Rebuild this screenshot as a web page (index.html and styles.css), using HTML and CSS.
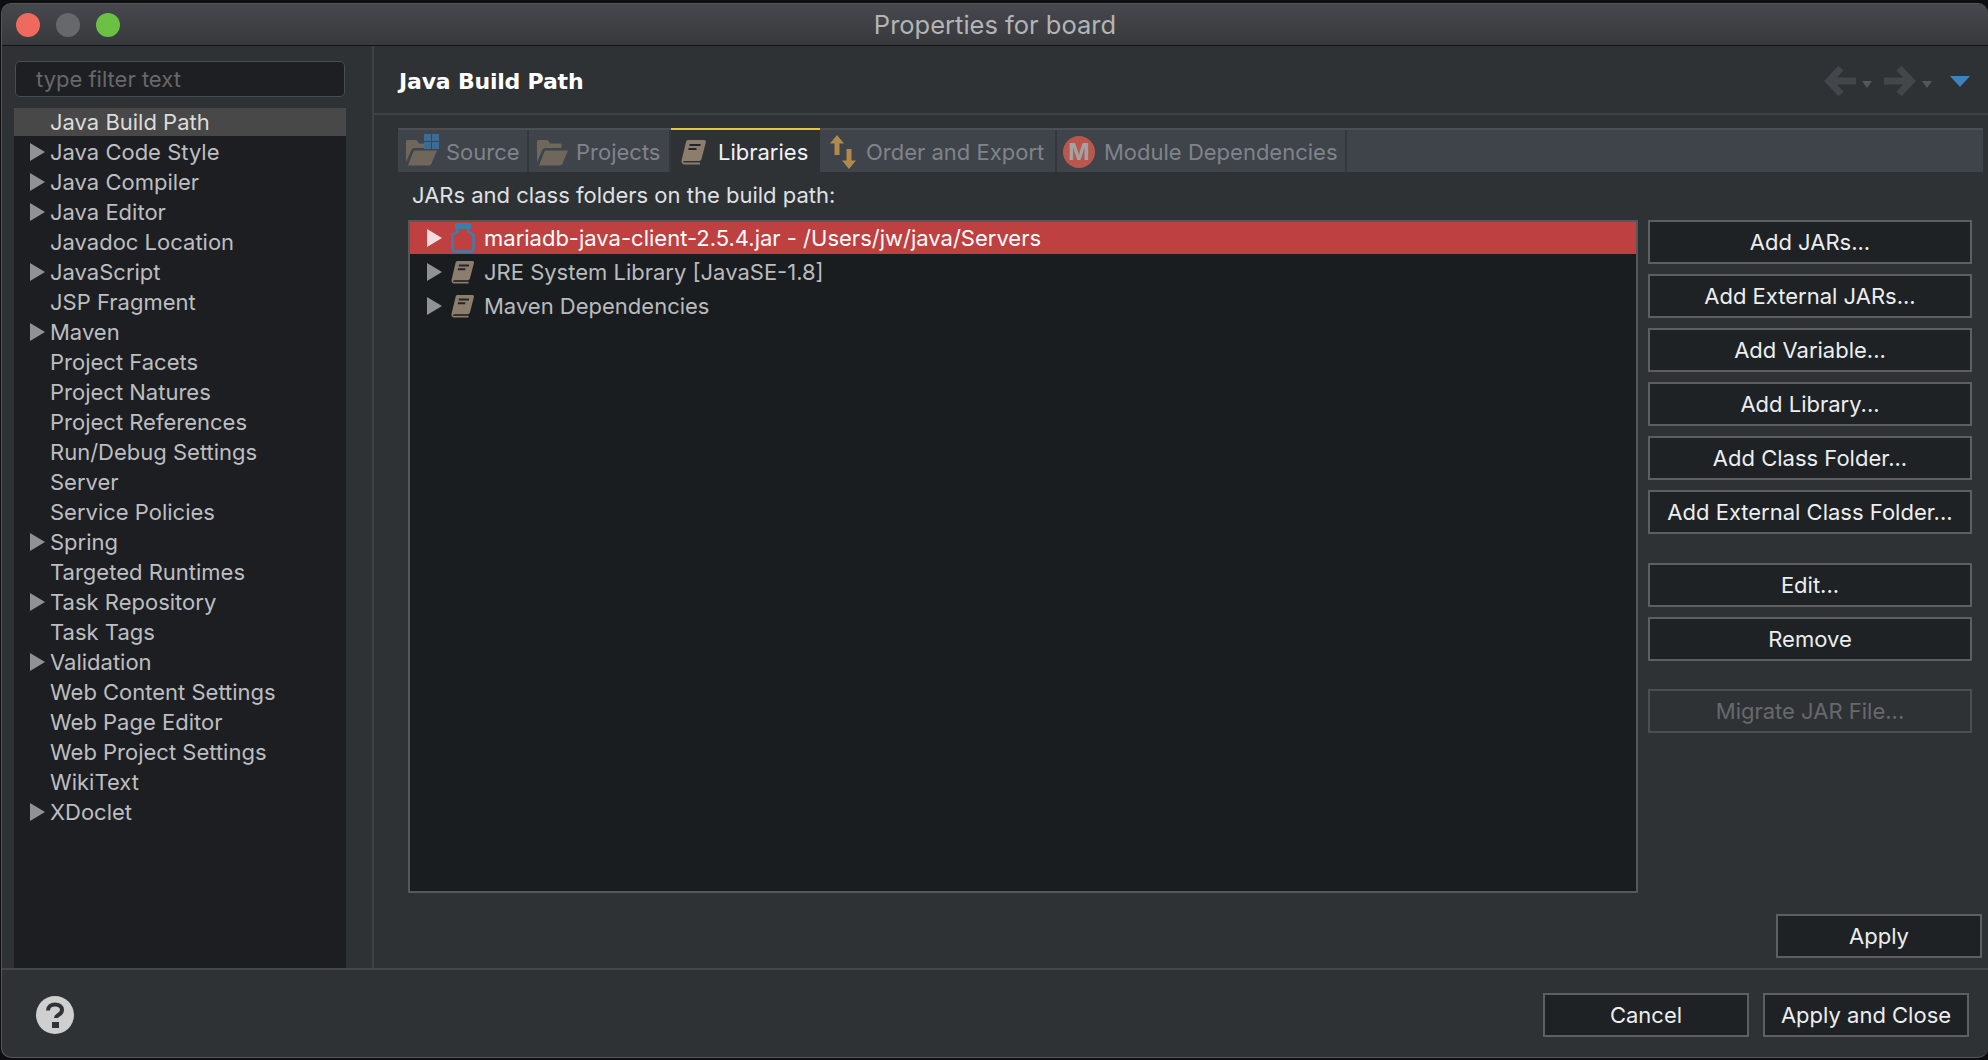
FILE: index.html
```html
<!DOCTYPE html>
<html lang="en">
<head>
  <meta charset="UTF-8">
  <title>Properties for board</title>
  <link rel="stylesheet" href="styles.css">
</head>
<body>
  <svg class="defs" width="0" height="0">
    <symbol id="folder" viewBox="0 0 32 28">
      <path d="M1 24V3.500C1 2.500 1.800 2 2.600 2h8c.8 0 1.400.4 1.800 1l1.600 2.500h10c1 0 1.600.7 1.600 1.600V10H9.500C8 10 7 10.700 6.400 12L2 22z" fill="#6f675c"/>
      <path d="M3 27.500 8.300 14c.4-1 1-1.500 2-1.500H32L26.500 25.500c-.5 1.200-1.300 2-2.500 2z" fill="#6f675c"/>
    </symbol>
    <symbol id="book" viewBox="0 0 26 26">
      <path d="M7 1h16c1.500 0 2.200 1 1.800 2.400L20.500 20c-.4 1.300-1.300 2-2.500 2H4c-1.800 0-2.600 1.500-1.500 1.500H19v2H4C1 25.500 0 23 .8 20.500L5 3C5.300 1.700 6 1 7 1z" fill="#8c7d6c"/>
      <path d="M8.500 6h11M7.500 10h8" stroke="#22252a" stroke-width="2"/>
    </symbol>
    <symbol id="jar" viewBox="0 0 24 30">
      <rect x="4" y="0" width="16" height="6" rx="1.500" fill="#3f7cae"/>
      <path d="M6.500 6v2.500L1.500 12v13.500c0 2 1 3 3 3h15c2 0 3-1 3-3V12l-5-3.500V6" fill="none" stroke="#3f7cae" stroke-width="2.500"/>
    </symbol>
  </svg>

  <div class="window">
    <div class="titlebar">
      <div class="lights">
        <span class="light red"></span>
        <span class="light grey"></span>
        <span class="light green"></span>
      </div>
      <div class="title">Properties for board</div>
    </div>

    <div class="main">
      <div class="sidebar">
        <div class="filter">type filter text</div>
        <ul class="tree">
          <li class="selected">Java Build Path</li>
          <li class="arrow">Java Code Style</li>
          <li class="arrow">Java Compiler</li>
          <li class="arrow">Java Editor</li>
          <li>Javadoc Location</li>
          <li class="arrow">JavaScript</li>
          <li>JSP Fragment</li>
          <li class="arrow">Maven</li>
          <li>Project Facets</li>
          <li>Project Natures</li>
          <li>Project References</li>
          <li>Run/Debug Settings</li>
          <li>Server</li>
          <li>Service Policies</li>
          <li class="arrow">Spring</li>
          <li>Targeted Runtimes</li>
          <li class="arrow">Task Repository</li>
          <li>Task Tags</li>
          <li class="arrow">Validation</li>
          <li>Web Content Settings</li>
          <li>Web Page Editor</li>
          <li>Web Project Settings</li>
          <li>WikiText</li>
          <li class="arrow">XDoclet</li>
        </ul>
      </div>

      <div class="content">
        <div class="header">
          <h1>Java Build Path</h1>
          <div class="nav">
            <svg width="32" height="32" viewBox="0 0 32 32"><path d="M17 3 5 16l12 13M6 16h26" fill="none" stroke="#43464b" stroke-width="7"/></svg>
            <span class="mini"></span>
            <svg width="32" height="32" viewBox="0 0 32 32"><path d="M15 3l12 13-12 13M26 16H0" fill="none" stroke="#43464b" stroke-width="7"/></svg>
            <span class="mini"></span>
            <span class="menu"></span>
          </div>
        </div>

        <div class="tabs">
          <div class="tab tab-source">
            <span class="tab-icon">
              <svg width="32" height="28"><use href="#folder"/></svg>
              <svg class="grid" width="15" height="15" viewBox="0 0 15 15"><path d="M0 0h7v7H0zM8 0h7v7H8zM0 8h7v7H0zM8 8h7v7H8z" fill="#3a6d96"/></svg>
            </span>
            Source
          </div>
          <div class="tab tab-projects">
            <svg width="32" height="28"><use href="#folder"/></svg>
            Projects
          </div>
          <div class="tab tab-libraries active">
            <svg width="26" height="26"><use href="#book"/></svg>
            Libraries
          </div>
          <div class="tab tab-order">
            <svg width="26" height="34" viewBox="0 0 26 34"><path d="M7 0l7 8.500H9.500V20h-5V8.500H0zM19 34l7-8.500h-4.500V14h-5v11.500H12z" fill="#b08a4c"/></svg>
            Order and Export
          </div>
          <div class="tab tab-module">
            <span class="m-icon">M</span>
            Module Dependencies
          </div>
        </div>

        <div class="body">
          <div class="label">JARs and class folders on the build path:</div>
          <div class="list-row">
            <div class="list">
              <div class="lib selected">
                <span class="twisty"></span>
                <svg width="24" height="30"><use href="#jar"/></svg>
                mariadb-java-client-2.5.4.jar - /Users/jw/java/Servers
              </div>
              <div class="lib">
                <span class="twisty"></span>
                <svg width="24" height="26"><use href="#book"/></svg>
                JRE System Library [JavaSE-1.8]
              </div>
              <div class="lib">
                <span class="twisty"></span>
                <svg width="24" height="26"><use href="#book"/></svg>
                Maven Dependencies
              </div>
            </div>
            <div class="buttons">
              <button>Add JARs...</button>
              <button>Add External JARs...</button>
              <button>Add Variable...</button>
              <button>Add Library...</button>
              <button>Add Class Folder...</button>
              <button>Add External Class Folder...</button>
              <button class="gap-top">Edit...</button>
              <button>Remove</button>
              <button class="gap-top disabled">Migrate JAR File...</button>
            </div>
          </div>
          <div class="apply-row">
            <button class="wide">Apply</button>
          </div>
        </div>
      </div>
    </div>

    <div class="footer">
      <svg class="help" width="38" height="38" viewBox="0 0 38 38">
        <circle cx="19" cy="19" r="19" fill="#cfcfcf"/>
        <path d="M12 14.500c0-4 3-6 7-6s7 2 7 5.500c0 3-2 4.200-4 5.300-1.300.7-2 1.200-2 2.700" fill="none" stroke="#2f3336" stroke-width="4"/>
        <rect x="16" y="26" width="7" height="6" fill="#2f3336"/>
      </svg>
      <div class="footer-buttons">
        <button class="wide">Cancel</button>
        <button class="wide">Apply and Close</button>
      </div>
    </div>
  </div>
</body>
</html>
```

FILE: styles.css
```css
* {
  box-sizing: border-box;
}
body {
  margin: 0;
  height: 1060px;
  overflow: hidden;
  background: #0e0e10;
  font-family: "Inter", "Noto Sans", sans-serif;
  font-size: 22px;
  color: #e6e8ea;
}
.defs {
  display: block;
  height: 0;
}
.window {
  margin: 3px 0 0 1px;
  height: 1055px;
  background: #2f3235;
  border: 1px solid #55585b;
  border-right: none;
  border-radius: 10px;
  overflow: hidden;
  display: flex;
  flex-direction: column;
}

/* title bar */
.titlebar {
  height: 42px;
  flex: none;
  display: flex;
  align-items: center;
  position: relative;
  background: linear-gradient(#46484d, #38393d);
  border-bottom: 1px solid #111214;
}
.lights {
  display: flex;
  gap: 16px;
  padding-left: 14px;
}
.light {
  width: 24px;
  height: 24px;
  border-radius: 50%;
}
.red { background: #ee6a5e; }
.grey { background: #67686c; }
.green { background: #6cc043; }
.title {
  position: absolute;
  left: 0;
  right: 0;
  text-align: center;
  font-size: 25.500px;
  color: #b3b4b6;
}

.main {
  height: 922px;
  flex: none;
  display: flex;
}

/* left tree */
.sidebar {
  width: 372px;
  flex: none;
  padding: 15px 26px 0 12px;
  border-right: 2px solid #3f4245;
  display: flex;
  flex-direction: column;
}
.filter {
  height: 36px;
  flex: none;
  margin: 0 1px;
  padding: 4px 20px;
  background: #1e1f22;
  border: 1px solid #4a4d50;
  border-radius: 5px;
  color: #66686b;
}
.tree {
  list-style: none;
  margin: 11px 0 0;
  padding: 0;
  flex: 1;
  background: #1d1e21;
  color: #bcbec1;
}
.tree li {
  height: 30px;
  line-height: 29px;
  padding-left: 36px;
  position: relative;
  white-space: nowrap;
}
.tree li.selected {
  background: #484848;
  color: #dcdcdc;
  height: 28px;
  margin-bottom: 2px;
}
.tree li.arrow::before,
.twisty {
  content: "";
  width: 0;
  height: 0;
  border-left: 15px solid #909295;
  border-top: 9px solid transparent;
  border-bottom: 9px solid transparent;
}
.tree li.arrow::before {
  position: absolute;
  left: 16px;
  top: 5px;
}

/* right page */
.content {
  flex: 1;
  min-width: 0;
  display: flex;
  flex-direction: column;
}
.header {
  height: 69px;
  flex: none;
  padding: 3px 18px 0 25px;
  border-bottom: 2px solid #3f4245;
  display: flex;
  align-items: center;
  justify-content: space-between;
}
h1 {
  margin: 0;
  font-family: "DejaVu Sans", sans-serif;
  font-size: 22px;
  letter-spacing: -0.2px;
  font-weight: 700;
  color: #fff;
}
.nav {
  display: flex;
  align-items: center;
}
.mini {
  width: 0;
  height: 0;
  margin: 6px 12px 0 6px;
  border-top: 7px solid #55575a;
  border-left: 5px solid transparent;
  border-right: 5px solid transparent;
}
.menu {
  width: 0;
  height: 0;
  margin-left: 6px;
  border-top: 11px solid #3f82bd;
  border-left: 10px solid transparent;
  border-right: 10px solid transparent;
}

/* tabs */
.tabs {
  height: 44px;
  flex: none;
  margin: 13px 5px 0 24px;
  background: #3f434a;
  border-top: 2px solid #4b4e53;
  display: flex;
}
.tab {
  display: flex;
  align-items: center;
  flex: none;
  padding-top: 2px;
  color: #80838a;
  border-right: 2px solid #34373b;
  padding-left: 7px;
  gap: 8px;
}
.tab-source { width: 131px; gap: 9px; }
.tab-projects { width: 142px; }
.tab-libraries { width: 149px; gap: 11px; padding-left: 10px; }
.tab-order { width: 237px; padding-left: 10px; gap: 10px; }
.tab-module { width: 290px; padding-left: 6px; gap: 9px; }
.tab.active {
  background: #2f3235;
  color: #f1f2f3;
  margin-top: -2px;
  border-top: 2px solid #f0c13a;
  border-right: none;
}
.tab-icon {
  position: relative;
  display: flex;
}
.grid {
  position: absolute;
  right: -2px;
  top: -4px;
}
.m-icon {
  width: 32px;
  height: 32px;
  border-radius: 50%;
  background: #b9574f;
  color: #a3a3a3;
  font-weight: 700;
  font-size: 23px;
  line-height: 32px;
  text-align: center;
}

/* list and buttons */
.body {
  flex: 1;
  padding: 0 6px 0 34px;
  display: flex;
  flex-direction: column;
}
.label {
  height: 48px;
  padding: 10px 4px 0;
  color: #dfe1e3;
}
.list-row {
  display: flex;
  gap: 10px;
  height: 673px;
}
.list {
  width: 1230px;
  flex: none;
  background: #1a1d20;
  border: 2px solid #55585b;
}
.lib {
  height: 34px;
  display: flex;
  align-items: center;
  padding-left: 17px;
  gap: 9px;
  color: #b9bbbe;
}
.lib svg {
  margin-left: -1px;
}
.lib.selected {
  height: 32px;
  margin-bottom: 1px;
  background: #bf4040;
  color: #fff;
}
.twisty {
  margin-right: 1px;
}
.lib.selected .twisty {
  border-left-color: #f2dede;
}
.buttons {
  width: 324px;
  flex: none;
  display: flex;
  flex-direction: column;
  gap: 10px;
}
button {
  height: 44px;
  flex: none;
  padding: 0;
  background: #1f2224;
  border: 2px solid #5d5f61;
  color: #eceef0;
  font: inherit;
}
button.gap-top {
  margin-top: 19px;
}
button.disabled {
  background: #2f3235;
  color: #66696c;
  border-color: #4c4f52;
  margin-top: 18px;
}
button.wide {
  width: 206px;
}
.apply-row {
  display: flex;
  justify-content: flex-end;
  margin-top: 21px;
}

/* footer */
.footer {
  flex: 1;
  border-top: 2px solid #44474a;
  display: flex;
  align-items: center;
  justify-content: space-between;
  padding: 3px 19px 0 34px;
}
.help {
  flex: none;
}
.footer-buttons {
  display: flex;
  gap: 14px;
}
```
